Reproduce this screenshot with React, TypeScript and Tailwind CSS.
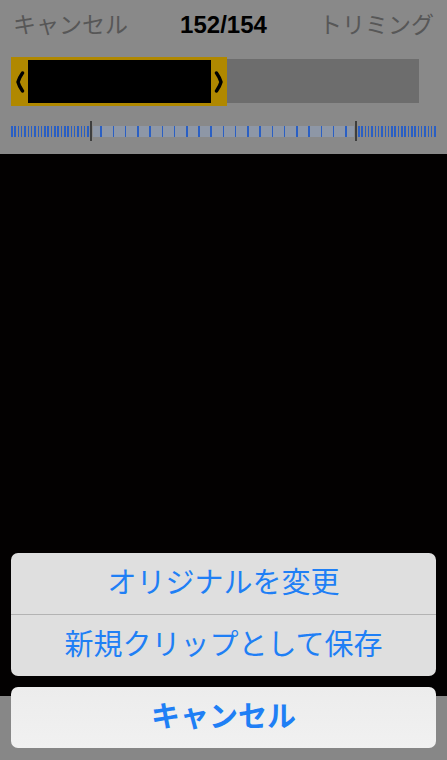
import React from 'react';

const font = { fontFamily: '"Liberation Sans", "Noto Sans CJK JP", sans-serif' };

const Chevron = ({ dir }: { dir: 'left' | 'right' }) => (
  <svg width="10" height="22" viewBox="0 0 10 22" className="shrink-0">
    <path
      d={dir === 'left' ? 'M7.5 2 Q4 7 3 11 Q4 15 7.5 20' : 'M2.5 2 Q6 7 7 11 Q6 15 2.5 20'}
      fill="none"
      stroke="#000"
      strokeWidth="3.4"
      strokeLinecap="round"
      strokeLinejoin="round"
    />
  </svg>
);

const DenseTicks = ({ count }: { count: number }) => (
  <div className="flex h-[11px] flex-1 justify-between">
    {Array.from({ length: count }, (_, i) => (
      <div key={i} className="h-full w-[1.5px] bg-[#2a5fc4]" />
    ))}
  </div>
);

const Marker = () => <div className="h-[20px] w-[2px] shrink-0 bg-[#3e3e3e]" />;

export default function App() {
  return (
    <div className="relative flex h-[760px] w-[447px] flex-col overflow-hidden bg-black" style={font}>
      {/* Dimmed trim header */}
      <div className="flex h-[154px] flex-none flex-col bg-[#898989] px-[11px]">
        <div className="flex h-[50px] items-center px-[2px]">
          <span className="flex-1 text-[23px] text-[#575757]">キャンセル</span>
          <span className="flex-1 text-center text-[24px] font-bold text-black">152/154</span>
          <span className="flex-1 text-right text-[23px] text-[#575757]">トリミング</span>
        </div>

        <div className="mt-[7px] flex items-start">
          <div className="flex h-[49px] w-[216px] items-center bg-[#b08800] py-[3px]">
            <div className="flex w-[17px] justify-center">
              <Chevron dir="left" />
            </div>
            <div className="h-full flex-1 bg-black" />
            <div className="flex w-[16px] justify-center">
              <Chevron dir="right" />
            </div>
          </div>
          <div className="mt-[2px] h-[44px] w-[192px] bg-[#6d6d6d]" />
        </div>

        <div className="mt-[15px] flex h-[20px] items-center">
          <DenseTicks count={24} />
          <div className="mx-[1px] flex items-center">
            <Marker />
          </div>
          <div className="flex h-[11px] w-[261px] items-center justify-around bg-[#8e97a6] px-[2px]">
            {Array.from({ length: 21 }, (_, i) => (
              <div key={i} className="h-full w-[1.5px] bg-[#2a5fc4]" />
            ))}
          </div>
          <div className="mx-[1px] flex items-center">
            <Marker />
          </div>
          <DenseTicks count={24} />
        </div>
      </div>

      {/* Dimmed video area */}
      <div className="flex-1 bg-[#030101]" />

      {/* Dimmed bottom toolbar */}
      <div className="h-[64px] flex-none bg-[#878787]" />

      {/* Action sheet */}
      <div className="absolute inset-x-0 bottom-0 flex flex-col gap-[11px] px-[11px] pb-[12px]">
        <div className="overflow-hidden rounded-[7px] bg-[#dfdfdf]">
          <button className="flex h-[62px] w-full items-center justify-center border-b border-[#b3b3b3] text-[29px] text-[#1f7ff5]">
            オリジナルを変更
          </button>
          <button className="flex h-[61px] w-full items-center justify-center text-[29px] text-[#1f7ff5]">
            新規クリップとして保存
          </button>
        </div>
        <button className="flex h-[61px] w-full items-center justify-center rounded-[7px] bg-gradient-to-b from-[#ececec] to-[#f1f1f1] text-[29px] font-bold text-[#1f7ff5]">
          キャンセル
        </button>
      </div>
    </div>
  );
}
